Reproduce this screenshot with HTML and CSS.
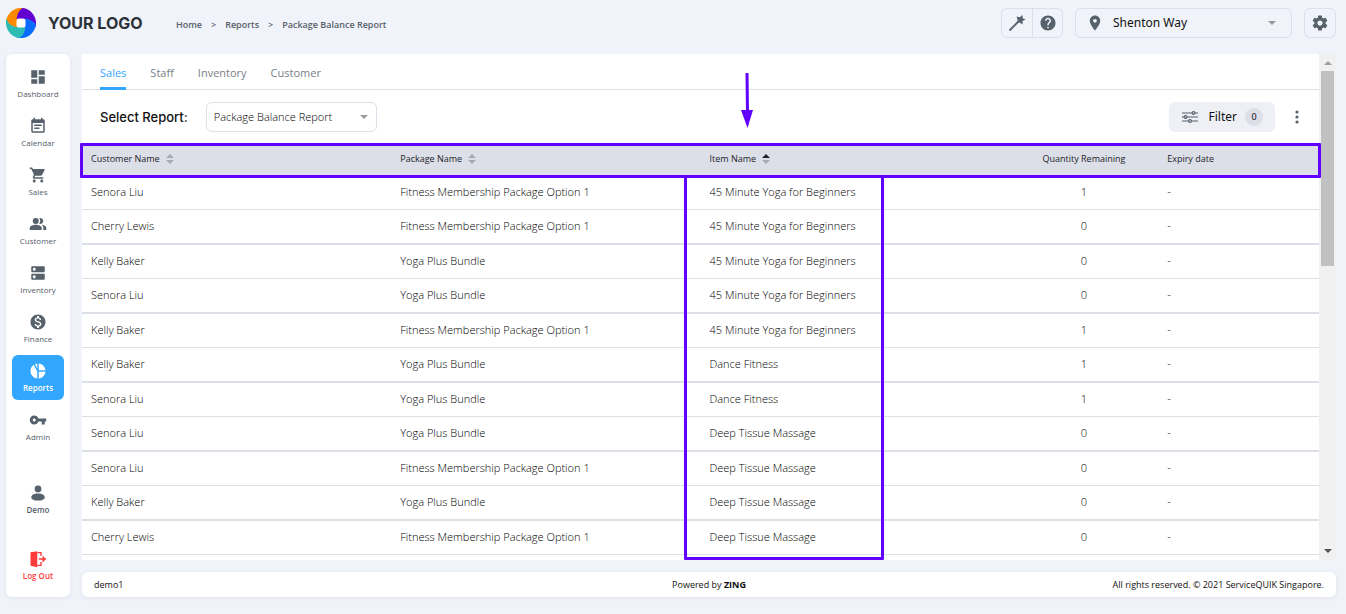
FILE: index.html
```html
<!DOCTYPE html>
<html lang="en">
<head>
<meta charset="utf-8">
<meta name="viewport" content="width=device-width, initial-scale=1">
<title>Package Balance Report</title>
<link rel="stylesheet" href="styles.css">
</head>
<body>
<svg class="defs" width="0" height="0" aria-hidden="true">
  <symbol id="caret" viewBox="0 0 8 4"><path d="M0 0h8L4 4z"/></symbol>
  <symbol id="sort" viewBox="0 0 8 10"><path d="M4 0l4 4H0z"/><path d="M0 6h8l-4 4z"/></symbol>
  <symbol id="sort-up" viewBox="0 0 8 10"><path fill="#212529" d="M4 0l4 4H0z"/><path d="M0 6h8l-4 4z"/></symbol>
  <path id="petal" d="M11 19.500C4 18.500.5 15 .1 13A15 15 0 0 1 19.500.7C14 2 11.500 6 11 11z"/>
</svg>

<header class="topbar">
  <a class="brand" href="#">
    <svg class="brand-mark" viewBox="0 0 30 30" aria-hidden="true">
      <use href="#petal" fill="#ff8a00"/>
      <use href="#petal" fill="#6200d2" transform="rotate(90 15 15)"/>
      <use href="#petal" fill="#0a6cff" transform="rotate(180 15 15)"/>
      <use href="#petal" fill="#2cbcb4" transform="rotate(270 15 15)"/>
      <rect x="10.500" y="10.500" width="9" height="9" rx="2.500" fill="#fff"/>
    </svg>
    <span class="brand-name">YOUR LOGO</span>
  </a>
  <nav class="crumbs" aria-label="Breadcrumb">
    <a href="#">Home</a><span>&gt;</span><a href="#">Reports</a><span>&gt;</span><a href="#">Package Balance Report</a>
  </nav>
  <div class="tools">
    <div class="tool-pair">
      <button type="button" aria-label="Quick actions"><svg width="18" height="18" viewBox="0 0 18 18"><path d="M1.500 16.500L10 8" stroke="currentColor" stroke-width="1.800"/><path fill="currentColor" d="M8.500 2.500l3.200.8L14.500 1l.2 3.200L17.500 5.500l-3 1.500.2 3.600-3-2-3.700 1 1.700-3.400z"/></svg></button>
      <button type="button" aria-label="Help"><svg width="18" height="18" viewBox="0 0 24 24"><path fill="currentColor" d="M12 2C6.480 2 2 6.480 2 12s4.480 10 10 10 10-4.480 10-10S17.520 2 12 2zm1 17h-2v-2h2v2zm2.070-7.750l-.9.920C13.450 12.900 13 13.500 13 15h-2v-.5c0-1.100.45-2.100 1.170-2.830l1.240-1.260c.37-.36.590-.86.590-1.410 0-1.100-.9-2-2-2s-2 .9-2 2H8c0-2.210 1.790-4 4-4s4 1.790 4 4c0 .88-.36 1.680-.930 2.250z"/></svg></button>
    </div>
    <label class="location">
      <svg class="pin" width="20" height="18" viewBox="0 0 24 24" aria-hidden="true"><path fill="currentColor" d="M12 2C8.130 2 5 5.130 5 9c0 5.250 7 13 7 13s7-7.750 7-13c0-3.870-3.130-7-7-7zm0 9.500c-1.380 0-2.500-1.120-2.500-2.500s1.120-2.500 2.500-2.500 2.500 1.120 2.500 2.500-1.120 2.500-2.500 2.500z"/></svg>
      <select aria-label="Location"><option>Shenton Way</option></select>
      <svg class="caret" aria-hidden="true"><use href="#caret"/></svg>
    </label>
    <button class="gear" type="button" aria-label="Settings"><svg width="18" height="18" viewBox="0 0 24 24"><path fill="currentColor" d="M19.430 12.980c.04-.32.070-.64.070-.98s-.03-.66-.07-.98l2.110-1.650c.19-.15.240-.42.120-.64l-2-3.460c-.12-.22-.39-.3-.61-.22l-2.490 1c-.52-.4-1.080-.73-1.690-.98l-.38-2.650C14.460 2.180 14.250 2 14 2h-4c-.25 0-.46.180-.49.420l-.38 2.650c-.61.250-1.170.590-1.690.980l-2.490-1c-.23-.09-.49 0-.61.220l-2 3.460c-.13.220-.07.490.12.640l2.110 1.650c-.04.320-.07.650-.07.980s.03.660.070.980l-2.110 1.650c-.19.150-.24.420-.12.640l2 3.460c.12.220.39.300.61.220l2.490-1c.52.400 1.080.730 1.690.980l.38 2.650c.03.240.24.420.49.420h4c.25 0 .46-.18.490-.42l.38-2.650c.61-.25 1.170-.59 1.690-.98l2.490 1c.23.090.49 0 .61-.22l2-3.460c.12-.22.070-.49-.12-.64l-2.110-1.650zM12 15.500c-1.930 0-3.500-1.570-3.500-3.500s1.570-3.500 3.500-3.500 3.500 1.570 3.500 3.500-1.570 3.500-3.500 3.500z"/></svg></button>
  </div>
</header>

<div class="shell">
  <nav class="sidebar" aria-label="Main">
    <a href="#"><svg viewBox="0 0 24 24"><path d="M3 13h8V3H3v10zm0 8h8v-6H3v6zm10 0h8V11h-8v10zm0-18v6h8V3h-8z"/></svg>Dashboard</a>
    <a href="#"><svg viewBox="0 0 24 24"><path d="M17 10H7v2h10v-2zm2-7h-1V1h-2v2H8V1H6v2H5c-1.110 0-1.990.900-1.990 2L3 19c0 1.100.890 2 2 2h14c1.100 0 2-.9 2-2V5c0-1.100-.9-2-2-2zm0 16H5V8h14v11zm-5-5H7v2h7v-2z"/></svg>Calendar</a>
    <a href="#"><svg viewBox="0 0 24 24"><path d="M7 18c-1.100 0-1.990.900-1.990 2S5.900 22 7 22s2-.9 2-2-.9-2-2-2zM1 2v2h2l3.600 7.590-1.350 2.450c-.16.280-.25.610-.25.960 0 1.100.900 2 2 2h12v-2H7.420c-.14 0-.25-.11-.25-.25l.03-.12.900-1.630h7.450c.75 0 1.410-.41 1.750-1.030l3.580-6.490c.08-.14.120-.31.120-.48 0-.55-.45-1-1-1H5.210l-.94-2H1zm16 16c-1.100 0-1.990.900-1.990 2s.89 2 1.990 2 2-.9 2-2-.9-2-2-2z"/></svg>Sales</a>
    <a href="#"><svg viewBox="0 0 24 24"><path d="M16.670 13.130C18.040 14.060 19 15.320 19 17v3h4v-3c0-2.180-3.570-3.470-6.330-3.870z"/><circle cx="9" cy="8" r="4"/><path d="M15 12c2.210 0 4-1.790 4-4s-1.790-4-4-4c-.47 0-.91.100-1.330.240C14.500 5.270 15 6.580 15 8s-.5 2.730-1.330 3.760c.42.140.860.240 1.330.240zM9 13c-2.670 0-8 1.340-8 4v3h16v-3c0-2.660-5.330-4-8-4z"/></svg>Customer</a>
    <a href="#"><svg viewBox="0 0 24 24"><path d="M20 13H4c-.55 0-1 .45-1 1v6c0 .55.450 1 1 1h16c.55 0 1-.45 1-1v-6c0-.55-.45-1-1-1zM7 19c-1.100 0-2-.9-2-2s.9-2 2-2 2 .9 2 2-.9 2-2 2zM20 3H4c-.55 0-1 .45-1 1v6c0 .55.450 1 1 1h16c.55 0 1-.45 1-1V4c0-.55-.45-1-1-1zM7 9c-1.100 0-2-.9-2-2s.9-2 2-2 2 .9 2 2-.9 2-2 2z"/></svg>Inventory</a>
    <a href="#"><svg viewBox="0 0 24 24"><path d="M12 2C6.480 2 2 6.480 2 12s4.480 10 10 10 10-4.480 10-10S17.520 2 12 2zm1.410 16.090V20h-2.670v-1.930c-1.710-.36-3.160-1.460-3.270-3.400h1.960c.1 1.050.820 1.870 2.650 1.870 1.960 0 2.400-.98 2.400-1.590 0-.83-.44-1.610-2.670-2.140-2.480-.6-4.180-1.620-4.180-3.670 0-1.720 1.390-2.840 3.110-3.210V4h2.670v1.950c1.860.45 2.790 1.860 2.850 3.390H14.300c-.05-1.110-.64-1.870-2.220-1.870-1.500 0-2.400.680-2.400 1.640 0 .84.650 1.390 2.670 1.910s4.180 1.390 4.180 3.910c-.01 1.830-1.380 2.830-3.120 3.160z"/></svg>Finance</a>
    <a class="active" href="#" aria-current="page"><svg viewBox="0 0 24 24"><path d="M13 2v9h9c-.5-4.800-4.200-8.500-9-9zM13 13v9c4.800-.5 8.500-4.200 9-9zM11 22v-9.500L6.200 3.800C3.600 5.600 2 8.600 2 12c0 5.200 3.900 9.500 9 10zM8 2.900L11 8.500V2c-1 .1-2 .4-3 .9z"/></svg>Reports</a>
    <a href="#"><svg viewBox="0 0 24 24"><path d="M12.650 10C11.830 7.670 9.610 6 7 6c-3.310 0-6 2.690-6 6s2.690 6 6 6c2.610 0 4.830-1.670 5.650-4H17v4h4v-4h2v-4H12.650zM7 14c-1.100 0-2-.9-2-2s.9-2 2-2 2 .9 2 2-.9 2-2 2z"/></svg>Admin</a>
    <a class="user" href="#"><svg viewBox="0 0 24 24"><circle cx="12" cy="6.500" r="4.500"/><path d="M12 12.500c-5 0-9 1.800-9 5 0 3 4 4.500 9 4.500s9-1.500 9-4.500c0-3.200-4-5-9-5z"/></svg>Demo</a>
    <a class="logout" href="#"><svg viewBox="0 0 24 24"><path d="M2 3l9-1.500V23L2 21z"/><path fill="none" stroke="currentColor" stroke-width="1.800" d="M11 3.500h5V8M16 16v4.500h-5"/><path d="M13 11h5V7.500l5 4.500-5 4.500V13h-5z"/></svg>Log Out</a>
  </nav>

  <div class="content">
    <main class="panel">
      <div class="scroll-area">
        <nav class="tabs" aria-label="Report groups">
          <a class="current" href="#">Sales</a><a href="#">Staff</a><a href="#">Inventory</a><a href="#">Customer</a>
        </nav>
        <div class="report-bar">
          <label class="report-label" for="report">Select Report:</label>
          <div class="report-select">
            <select id="report"><option>Package Balance Report</option></select>
            <svg class="caret" aria-hidden="true"><use href="#caret"/></svg>
          </div>
          <button class="filter" type="button">
            <svg width="16" height="12" viewBox="0 0 16 12" fill="none" stroke="currentColor" stroke-width="1.200" aria-hidden="true"><path d="M0 2h10M13 2h3M0 6h2M5 6h11M0 10h6.500M9.500 10H16"/><circle cx="11.500" cy="2" r="1.400"/><circle cx="3.500" cy="6" r="1.400"/><circle cx="8" cy="10" r="1.400"/></svg>
            Filter <span class="count">0</span>
          </button>
          <button class="more" type="button" aria-label="More options"><svg width="4" height="14" viewBox="0 0 4 14" fill="currentColor"><circle cx="2" cy="2" r="1.600"/><circle cx="2" cy="7" r="1.600"/><circle cx="2" cy="12" r="1.600"/></svg></button>
        </div>
        <div class="table-wrap">
          <table>
            <colgroup><col class="wide"><col class="wide"><col class="wide"><col class="qty-col"><col></colgroup>
            <thead>
              <tr>
                <th scope="col"><button type="button">Customer Name<svg class="sort"><use href="#sort"/></svg></button></th>
                <th scope="col"><button type="button">Package Name<svg class="sort"><use href="#sort"/></svg></button></th>
                <th scope="col" aria-sort="ascending"><button type="button">Item Name<svg class="sort"><use href="#sort-up"/></svg></button></th>
                <th scope="col" class="qty">Quantity Remaining</th>
                <th scope="col">Expiry date</th>
              </tr>
            </thead>
            <tbody>
              <tr><td>Senora Liu</td><td>Fitness Membership Package Option 1</td><td>45 Minute Yoga for Beginners</td><td class="qty">1</td><td>-</td></tr>
              <tr><td>Cherry Lewis</td><td>Fitness Membership Package Option 1</td><td>45 Minute Yoga for Beginners</td><td class="qty">0</td><td>-</td></tr>
              <tr><td>Kelly Baker</td><td>Yoga Plus Bundle</td><td>45 Minute Yoga for Beginners</td><td class="qty">0</td><td>-</td></tr>
              <tr><td>Senora Liu</td><td>Yoga Plus Bundle</td><td>45 Minute Yoga for Beginners</td><td class="qty">0</td><td>-</td></tr>
              <tr><td>Kelly Baker</td><td>Fitness Membership Package Option 1</td><td>45 Minute Yoga for Beginners</td><td class="qty">1</td><td>-</td></tr>
              <tr><td>Kelly Baker</td><td>Yoga Plus Bundle</td><td>Dance Fitness</td><td class="qty">1</td><td>-</td></tr>
              <tr><td>Senora Liu</td><td>Yoga Plus Bundle</td><td>Dance Fitness</td><td class="qty">1</td><td>-</td></tr>
              <tr><td>Senora Liu</td><td>Yoga Plus Bundle</td><td>Deep Tissue Massage</td><td class="qty">0</td><td>-</td></tr>
              <tr><td>Senora Liu</td><td>Fitness Membership Package Option 1</td><td>Deep Tissue Massage</td><td class="qty">0</td><td>-</td></tr>
              <tr><td>Kelly Baker</td><td>Yoga Plus Bundle</td><td>Deep Tissue Massage</td><td class="qty">0</td><td>-</td></tr>
              <tr><td>Cherry Lewis</td><td>Fitness Membership Package Option 1</td><td>Deep Tissue Massage</td><td class="qty">0</td><td>-</td></tr>
            </tbody>
          </table>
          <div class="mark mark-head"></div>
          <div class="mark mark-items"></div>
          <svg class="mark-arrow" viewBox="0 0 14 56" aria-hidden="true"><path d="M7 1l.5 40" stroke="#6200ff" stroke-width="3"/><path d="M1 38h12L7.500 56z" fill="#6200ff"/></svg>
        </div>
      </div>
      <div class="scrollbar" aria-hidden="true">
        <svg class="arrow-up" viewBox="0 0 8 4"><path d="M4 0l4 4H0z"/></svg>
        <div class="thumb"></div>
        <svg class="arrow-down" viewBox="0 0 8 4"><path d="M0 0h8L4 4z"/></svg>
      </div>
    </main>
    <footer class="footer"><span>demo1</span><span>Powered by <b>ZING</b></span><span class="rights">All rights reserved. © 2021 ServiceQUIK Singapore.</span></footer>
  </div>
</div>
</body>
</html>
```
FILE: styles.css
```css
* { box-sizing: border-box; }
body {
  margin: 0;
  min-height: 100vh;
  display: flex;
  flex-direction: column;
  background: #f0f3f9;
  color: #212529;
  font: 11px/16px "Open Sans", sans-serif;
}
a { color: inherit; text-decoration: none; }
button, select { font: inherit; color: inherit; background: none; border: 0; margin: 0; padding: 0; }
select { appearance: none; outline: 0; }
button, select, label { cursor: pointer; }
svg { display: block; flex: none; }
.defs { position: absolute; }

.topbar { display: flex; align-items: center; height: 54px; padding: 0 10px 8px 6px; }
.brand { display: flex; align-items: center; gap: 12px; width: 170px; }
.brand-mark { width: 30px; height: 30px; }
.brand-name { font: 700 16px/24px Inter, sans-serif; color: #2d3138; white-space: nowrap; }
.crumbs { display: flex; gap: 9px; font-size: 9px; font-weight: 600; color: #59616b; padding-top: 3px; }
.tools { display: flex; gap: 12px; margin-left: auto; color: #56616c; }
.tool-pair, .location, .gear { display: flex; align-items: center; height: 30px; border: 1px solid #dcdee8; border-radius: 6px; }
.tool-pair button { display: flex; align-items: center; justify-content: center; width: 30px; height: 28px; }
.tool-pair button + button { border-left: 1px solid #dcdee8; }
.location { width: 217px; padding: 0 15px 0 9px; }
.location select { flex: 1; height: 28px; margin-left: 8px; font: 400 12px/16px "Noto Sans", sans-serif; color: #111; }
.gear { width: 32px; justify-content: center; }
.caret { width: 8px; height: 4px; fill: #999; pointer-events: none; }

.shell { flex: 1; display: grid; grid-template-columns: 64px minmax(0, 1fr); gap: 12px; padding: 0 10px 17px 6px; }
.sidebar {
  display: flex;
  flex-direction: column;
  align-items: center;
  gap: 4px;
  padding-top: 7px;
  background: #fff;
  border-radius: 6px;
  box-shadow: 0 1px 4px #dfe3ea;
  color: #56616c;
}
.sidebar a {
  display: flex;
  flex-direction: column;
  align-items: center;
  gap: 1px;
  width: 52px;
  height: 45px;
  padding-top: 7px;
  border-radius: 6px;
  font-size: 8px;
  line-height: 14px;
  white-space: nowrap;
}
.sidebar svg { width: 18px; height: 18px; fill: currentColor; }
.sidebar .active { background: #33a7ff; color: #fff; font-weight: 600; }
.sidebar .user { margin-top: 24px; font-weight: 600; }
.sidebar .logout { margin-top: 17px; color: #ff3b3b; font-weight: 600; }

.content { display: flex; flex-direction: column; gap: 12px; }
.panel { flex: 1; display: flex; background: #fff; }
.scroll-area { flex: 1; min-width: 0; }
.scrollbar { display: flex; flex-direction: column; align-items: center; width: 17px; padding: 7px 0; background: #f1f1f1; }
.scrollbar svg { width: 8px; height: 4px; }
.arrow-up { fill: #a0a0a0; }
.arrow-down { fill: #505050; margin-top: auto; }
.thumb { width: 13px; height: 195px; margin-top: 6px; background: #c1c1c1; }

.tabs { display: flex; gap: 24px; height: 36px; padding: 0 18px; border-bottom: 1px solid #dcdee8; font-weight: 500; color: #7a8087; }
.tabs a { height: 36px; padding-top: 11px; }
.tabs .current { color: #33a7ff; border-bottom: 3px solid #33a7ff; }
.report-bar { display: flex; align-items: center; height: 54px; padding: 0 16px 0 18px; }
.report-label { font: 500 13px/18px Inter, sans-serif; color: #111; }
.report-select { display: flex; align-items: center; width: 171px; height: 30px; margin-left: 18px; padding: 0 8px 0 7px; border: 1px solid #dcdee8; border-radius: 6px; }
.report-select select { flex: 1; height: 28px; font-weight: 300; color: #000; }
.filter { display: flex; align-items: center; gap: 11px; height: 30px; margin-left: auto; padding: 0 12px 0 13px; border-radius: 6px; background: #eff0f6; font: 400 12px/16px "Noto Sans", sans-serif; color: #111; }
.filter svg, .more { color: #56616c; }
.count { width: 18px; height: 18px; border-radius: 9px; background: #dcdee8; font-size: 9px; line-height: 18px; text-align: center; margin-left: -3px; }
.more { display: flex; justify-content: center; width: 12px; margin-left: 16px; }

.table-wrap { position: relative; padding-bottom: 5px; }
table { width: 100%; table-layout: fixed; border-collapse: separate; border-spacing: 0; }
.wide { width: 25%; }
.qty-col { width: 12%; }
th, td { padding: 0 9px 2px; text-align: left; white-space: nowrap; }
th { height: 32px; background: #dcdee8; font-size: 9px; font-weight: 500; }
th button { display: flex; align-items: center; gap: 6px; }
td { height: 34px; border-bottom: 1px solid #dcdee8; font-weight: 300; color: #000; }
tbody tr:nth-child(even) td { height: 35px; border-bottom-width: 2px; }
.qty { text-align: center; }
.sort { width: 8px; height: 10px; fill: #a4abb3; }

/* Callouts drawn over the table */
.mark { position: absolute; border: 3px solid #6200ff; border-radius: 1px; pointer-events: none; }
.mark-head { left: -2px; right: -2px; top: -1px; height: 35px; }
.mark-items { left: calc(50% - 17px); width: 200px; top: 31px; bottom: 0; }
.mark-arrow { position: absolute; left: calc(50% + 39px); top: -72px; width: 14px; height: 56px; }

.footer { display: grid; grid-template-columns: 1fr auto 1fr; align-items: center; height: 25px; padding: 0 12px; background: #fff; border-radius: 6px; box-shadow: 0 1px 4px #dfe3ea; font-size: 9px; color: #111; }
.rights { text-align: right; }
```
